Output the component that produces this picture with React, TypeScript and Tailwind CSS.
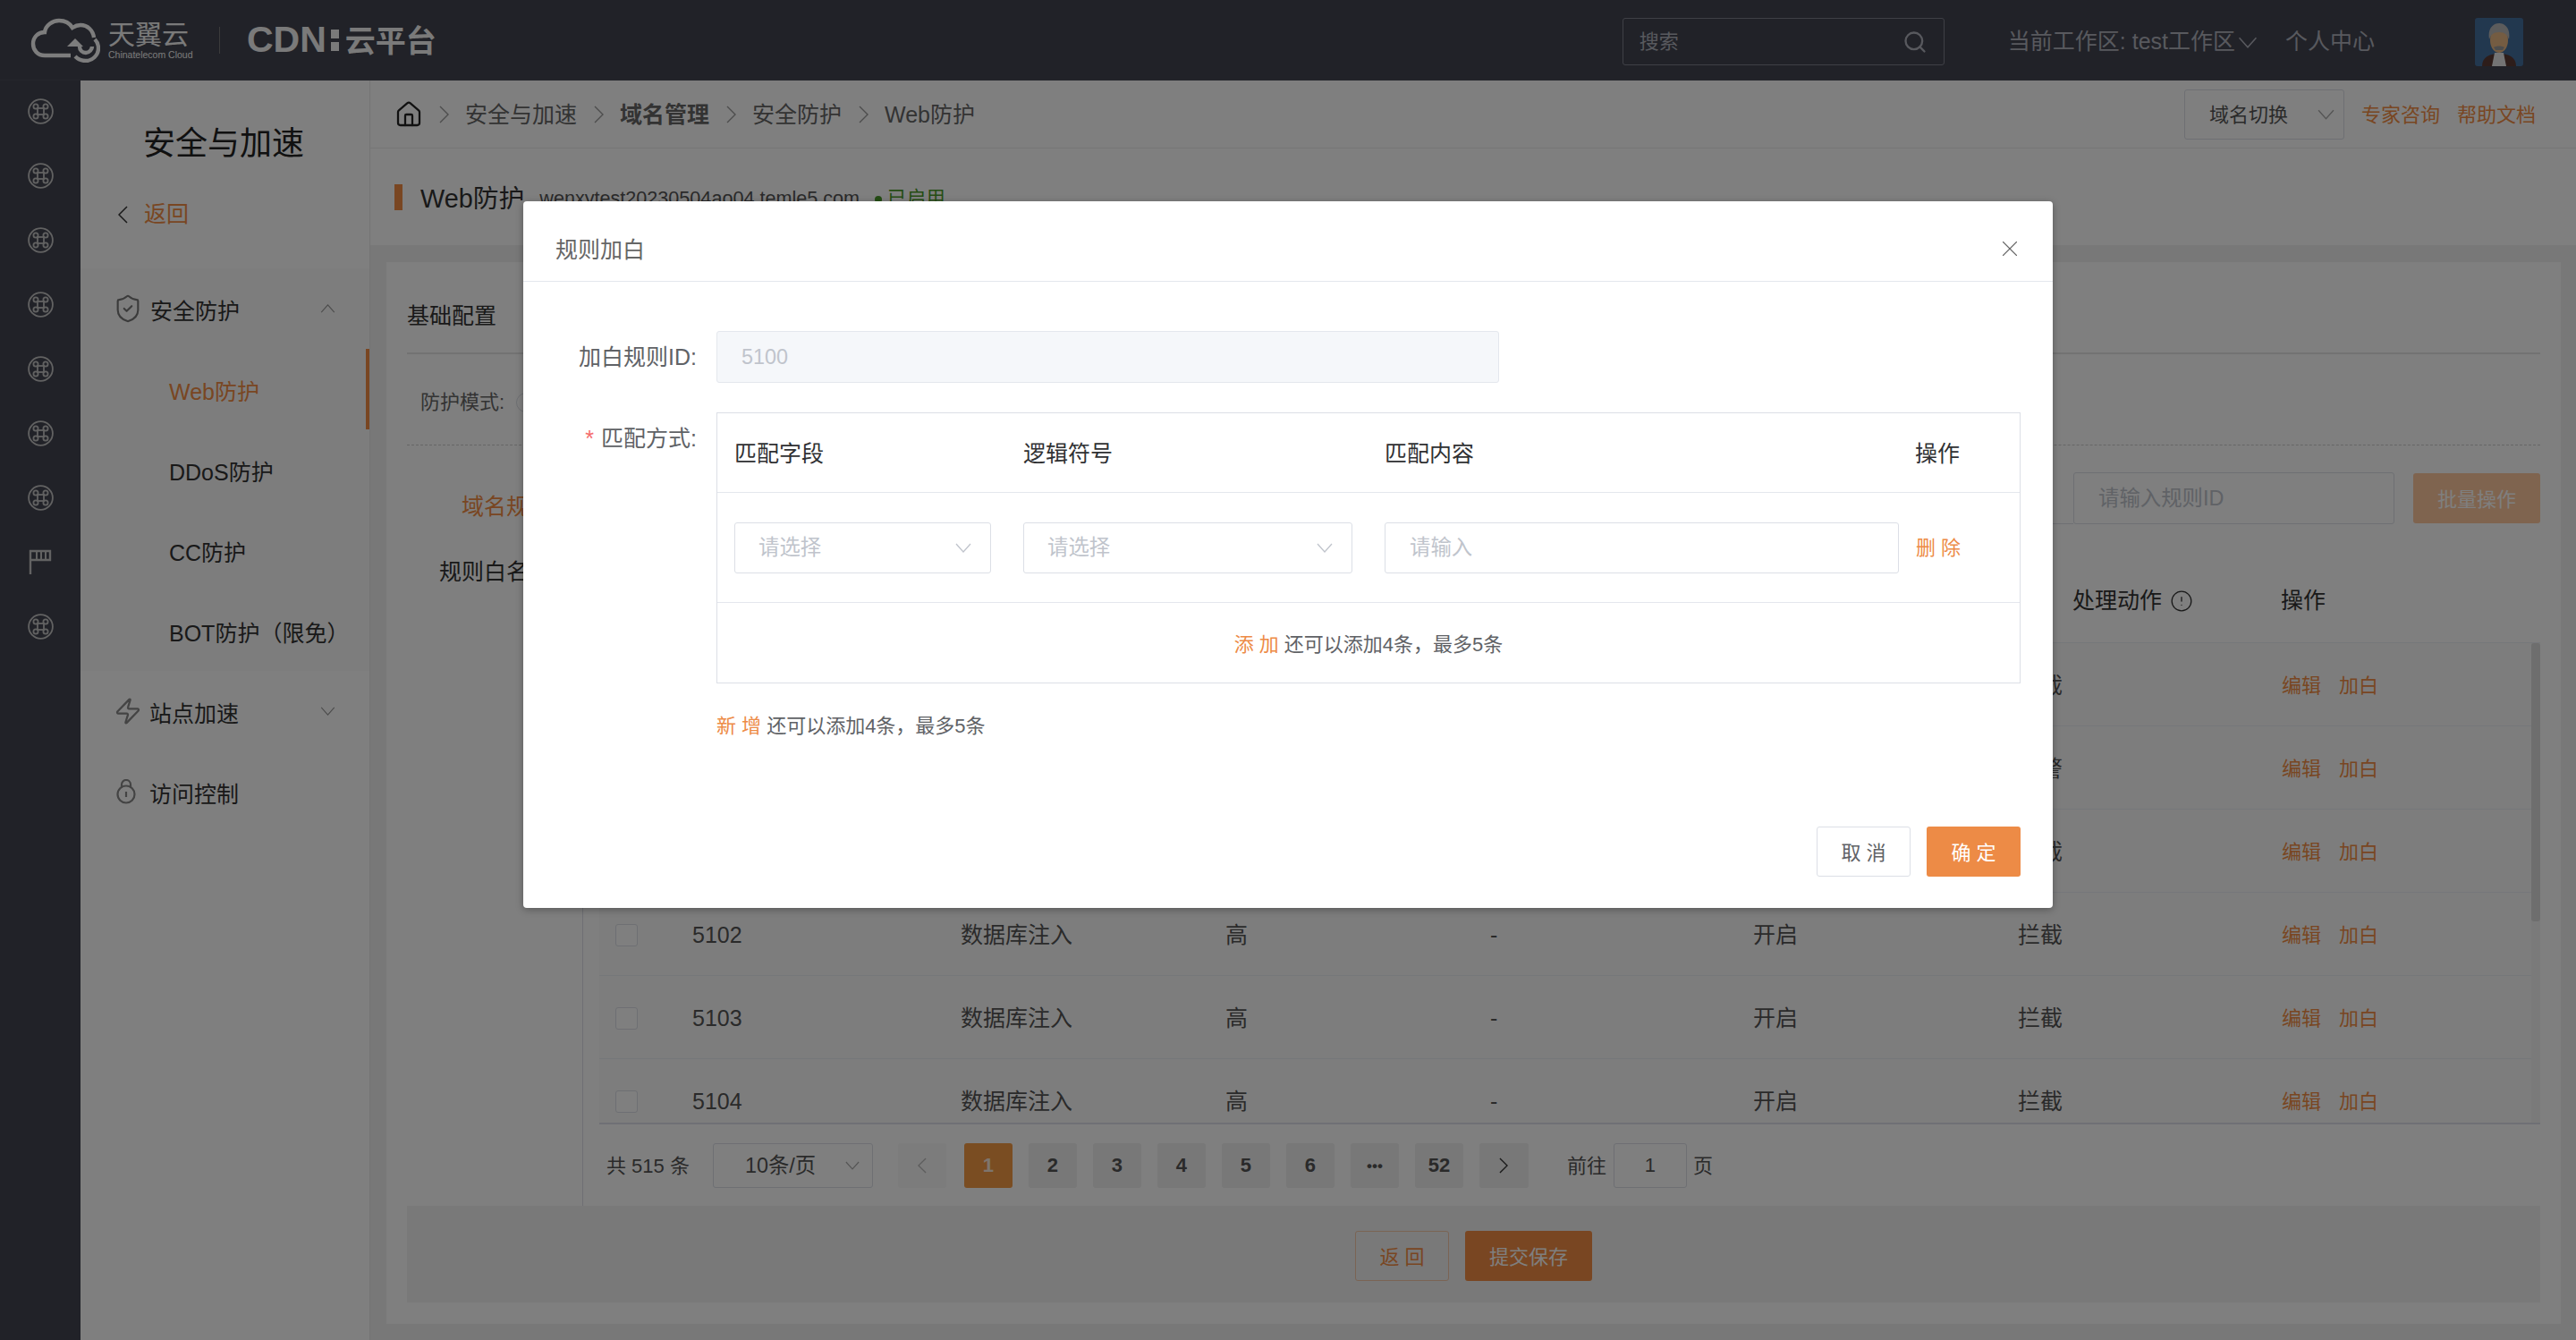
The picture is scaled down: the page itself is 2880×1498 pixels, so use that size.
import { House, Info, Search, ShieldCheck, X, Zap } from "lucide-react";

const FONT = "font-['Liberation_Sans','Noto_Sans_CJK_SC',sans-serif]";

const rows = [
  { id: "5099", action: "拦截" },
  { id: "5100", action: "告警" },
  { id: "5101", action: "拦截" },
  { id: "5102", action: "拦截" },
  { id: "5103", action: "拦截" },
  { id: "5104", action: "拦截" },
];

const pages = ["2", "3", "4", "5", "6", "•••", "52"];

// thin V used by every select and menu
const Chevron = ({ className, up }: { className: string; up?: boolean }) => (
  <svg viewBox="0 0 18 11" className={className} fill="none" stroke="currentColor" strokeWidth="1.3">
    <path d={up ? "M1 10l8-9 8 9" : "M1 1l8 9 8-9"} />
  </svg>
);

const Crumb = () => (
  <svg viewBox="0 0 11 20" className="h-[20px] w-[11px] text-[#9a9a9a]" fill="none" stroke="currentColor" strokeWidth="1.4">
    <path d="M1 1l9 9-9 9" />
  </svg>
);

const RailIcon = () => (
  <svg viewBox="0 0 29 29" className="h-[29px] w-[29px] text-[#c4c4c4]" fill="none" stroke="currentColor" strokeWidth="1.8">
    <circle cx="14.5" cy="14.5" r="13.4" />
    <rect x="11" y="11" width="7" height="7" />
    <circle cx="9" cy="9" r="2.6" />
    <circle cx="20" cy="9" r="2.6" />
    <circle cx="9" cy="20" r="2.6" />
    <circle cx="20" cy="20" r="2.6" />
  </svg>
);

const FlagIcon = () => (
  <svg viewBox="0 0 26 29" className="h-[29px] w-[26px] text-[#c4c4c4]" fill="none" stroke="currentColor" strokeWidth="2.4">
    <path d="M2 28V2h22v10H2" />
    <path d="M9 3v8M14 3v8M19 3v8" strokeWidth="2" />
  </svg>
);

const LockIcon = () => (
  <svg viewBox="0 0 22 28" className="h-[28px] w-[22px]" fill="none" stroke="currentColor" strokeWidth="2.2">
    <circle cx="11" cy="17" r="9.5" />
    <path d="M6 10V6a5 5 0 0 1 10 0v4" />
    <path d="M11 14v6" />
  </svg>
);

const CloudLogo = () => (
  <svg viewBox="0 0 78 50" className="h-[50px] w-[78px] text-[#fafafa]" fill="none" stroke="currentColor" strokeWidth="4.4">
    <path d="M45 42H16C8 42 3 36 3 29c0-8 6-13 13-13 1-8 9-13 16-13 7 0 12 3 15 8 3-2 6-3 9-3 8 0 14 6 15 14" />
    <path d="M72 24c3 3 4 7 4 10 0 8-7 14-14 14-5 0-9-2-12-5" />
    <path d="M55 32c0 4 3 7 7 7s7-4 7-7" />
    <path d="M41 32l9-9 9 9z" fill="currentColor" stroke="none" />
  </svg>
);

const Avatar = () => (
  <svg viewBox="0 0 54 54" className="h-[54px] w-[54px]">
    <rect width="54" height="54" rx="3" fill="#44709f" />
    <path d="M8 54c0-10 8-14 19-14s19 4 19 14z" fill="#5a3a34" />
    <path d="M19 54l3-15h10l3 15z" fill="#e8e8e8" />
    <ellipse cx="27" cy="25" rx="10" ry="14" fill="#e8b884" />
    <path d="M16 24c-2-12 4-18 11-18s13 6 11 18c-2-5-4-8-11-8s-9 3-11 8z" fill="#b8b8b8" />
    <path d="M21 33c3-2 9-2 12 0l-2 3h-8z" fill="#9a9a9a" />
  </svg>
);

export default function App() {
  return (
    <div className={`relative h-[1498px] w-full overflow-hidden bg-white text-[#333] ${FONT}`}>
      {/* top bar */}
      <header className="flex h-[90px] items-center border-b border-[#4a4c58] bg-[#424450] pl-[34px] text-[#b0b2bc]">
        <CloudLogo />
        <div className="ml-[9px] flex w-[90px] flex-col text-[#f4f4f4]">
          <span className="text-[30px] leading-[32px]">天翼云</span>
          <span className="text-[10.5px] leading-[12px] whitespace-nowrap">Chinatelecom Cloud</span>
        </div>
        <div className="ml-[34px] h-[30px] w-px bg-[#777]" />
        <span className="ml-[30px] text-[41px] leading-none font-bold text-[#f4f4f4]">CDN</span>
        <div className="ml-[5px] flex flex-col gap-[4px]">
          <span className="h-[10px] w-[9px] bg-[#f4f4f4]" />
          <span className="h-[10px] w-[9px] bg-[#f4f4f4]" />
        </div>
        <span className="mt-[3px] ml-[7px] text-[34px] leading-none font-bold text-[#f4f4f4]">云平台</span>

        <div className="ml-[1326px] flex h-[53px] w-[360px] items-center justify-between self-start rounded-[3px] border border-[#7e808c] mt-[20px] pr-[18px] pl-[18px] text-[22px]">
          <span>搜索</span>
          <Search size={28} strokeWidth={2} />
        </div>
        <span className="mt-[5px] ml-[71px] flex items-center text-[25px] whitespace-nowrap">
          当前工作区: test工作区
          <Chevron className="ml-[3px] h-[13px] w-[22px]" />
        </span>
        <span className="mt-[5px] ml-[31px] text-[25px] whitespace-nowrap">个人中心</span>
        <div className="mt-[20px] ml-[112px] self-start">
          <Avatar />
        </div>
      </header>

      <div className="flex h-[1408px]">
        {/* icon rail */}
        <aside className="flex w-[90px] shrink-0 flex-col items-center gap-[43px] bg-[#424450] pt-[20px]">
          <RailIcon />
          <RailIcon />
          <RailIcon />
          <RailIcon />
          <RailIcon />
          <RailIcon />
          <RailIcon />
          <FlagIcon />
          <RailIcon />
        </aside>

        {/* menu */}
        <nav className="w-[323px] shrink-0 bg-white">
          <h1 className="pt-[49px] pl-[70px] text-[36px] leading-[44px] text-[#222]">安全与加速</h1>
          <div className="mt-[42px] flex h-[30px] items-center pl-[42px] text-[25px] text-[#f28d44]">
            <svg viewBox="0 0 11 20" className="mr-[18px] h-[20px] w-[11px] text-[#333]" fill="none" stroke="currentColor" strokeWidth="1.5">
              <path d="M10 1l-9 9 9 9" />
            </svg>
            返回
          </div>
          <div className="mt-[45px] bg-[#fafafa]">
            <div className="flex h-[90px] items-center pr-[38px] pl-[36px] text-[25px]">
              <ShieldCheck size={34} strokeWidth={1.5} className="text-[#777]" />
              <span className="ml-[8px] flex-1 pt-[7px]">安全防护</span>
              <Chevron up className="h-[10px] w-[17px] text-[#999]" />
            </div>
            <div className="flex h-[90px] items-center border-r-4 border-[#f28d44] pt-[7px] pl-[99px] text-[25px] text-[#f28d44]">
              Web防护
            </div>
            <div className="flex h-[90px] items-center pt-[7px] pl-[99px] text-[25px]">DDoS防护</div>
            <div className="flex h-[90px] items-center pt-[7px] pl-[99px] text-[25px]">CC防护</div>
            <div className="flex h-[90px] items-center pt-[7px] pl-[99px] text-[25px]">BOT防护（限免）</div>
          </div>
          <div className="flex h-[90px] items-center pr-[38px] pl-[37px] text-[25px]">
            <Zap size={32} strokeWidth={1.7} className="text-[#888]" />
            <span className="ml-[8px] flex-1 pt-[7px]">站点加速</span>
            <Chevron className="h-[10px] w-[17px] text-[#999]" />
          </div>
          <div className="flex h-[90px] items-center pl-[40px] text-[25px]">
            <span className="text-[#888]">
              <LockIcon />
            </span>
            <span className="ml-[15px] pt-[7px]">访问控制</span>
          </div>
        </nav>

        <main className="flex min-w-0 flex-1 flex-col border-l border-[#e8e8e8]">
          {/* breadcrumb */}
          <div className="flex h-[76px] shrink-0 items-center gap-[18.5px] border-b border-[#ececec] pr-[45px] pl-[27px] text-[25px] text-[#666]">
            <House size={32} strokeWidth={1.7} className="-mr-[1px] text-[#222]" />
            <Crumb />
            <span className="pt-[2px]">安全与加速</span>
            <Crumb />
            <span className="pt-[2px] font-bold">域名管理</span>
            <Crumb />
            <span className="pt-[2px]">安全防护</span>
            <Crumb />
            <span className="pt-[2px]">Web防护</span>
            <div className="ml-auto flex items-center text-[22px]">
              <div className="flex h-[56px] w-[179px] items-center justify-between rounded-[3px] border border-[#dcdfe6] pr-[10px] pl-[27px]">
                <span className="pt-[2px] text-[#555]">域名切换</span>
                <Chevron className="h-[12px] w-[19px] text-[#aaa]" />
              </div>
              <span className="ml-[19px] pt-[2px] text-[#f28d44]">专家咨询</span>
              <span className="ml-[19px] pt-[2px] text-[#f28d44]">帮助文档</span>
            </div>
          </div>

          {/* page title */}
          <div className="flex h-[108px] shrink-0 items-center pl-[27px]">
            <span className="h-[29px] w-[9px] bg-[#f28d44]" />
            <span className="ml-[20px] pt-[5px] text-[28.8px] text-[#333]">Web防护</span>
            <span className="ml-[17px] pt-[5px] text-[21.6px] text-[#555]">wenxytest20230504ao04.temle5.com</span>
            <span className="mt-[5px] ml-[17px] h-[8px] w-[8px] rounded-full bg-[#4a9a2a]" />
            <span className="ml-[6px] pt-[5px] text-[21.6px] text-[#4a9a2a]">已启用</span>
          </div>

          <div className="min-h-0 flex-1 bg-[#f0f0f0] pt-[19px] pr-[17px] pb-[18px] pl-[18px]">
            <section className="flex h-full flex-col bg-white px-[23px] pb-[24px]">
              <div className="flex h-[103px] shrink-0 items-center border-b-2 border-[#e4e4e4] pt-[20px] text-[25px]">基础配置</div>
              <div className="flex h-[102px] shrink-0 items-center border-b border-dashed border-[#ccc] pt-[6px] pl-[15px] text-[22px] text-[#666]">
                防护模式:
                <span className="ml-[13px] h-[22px] w-[22px] rounded-full border border-[#dcdfe6]" />
              </div>

              <div className="flex min-h-0 flex-1">
                <div className="w-[197px] shrink-0 border-r border-[#dcdfe6] pt-[50px] text-[25px]">
                  <div className="h-[36px] pl-[61px] leading-[36px] text-[#f28d44]">域名规则</div>
                  <div className="mt-[37px] h-[36px] pl-[36px] leading-[36px]">规则白名单</div>
                </div>

                <div className="flex min-w-0 flex-1 flex-col pl-[18px]">
                  {/* filters */}
                  <div className="mt-[30px] flex h-[58px] shrink-0 items-center justify-end">
                    <div className="flex h-[58px] w-[80px] items-center border-b border-[#dcdfe6]">
                      <Chevron className="ml-[40px] h-[10px] w-[16px] text-[#aaa]" />
                    </div>
                    <div className="flex h-[58px] w-[359px] items-center rounded-[3px] border border-[#dcdfe6] pt-[2px] pl-[27px] text-[23.4px] text-[#c0c4cc]">
                      请输入规则ID
                    </div>
                    <div className="ml-[21px] flex h-[56px] w-[142px] items-center justify-center rounded-[3px] bg-[#ffc89e] pt-[2px] text-[22px] text-white">
                      批量操作
                    </div>
                  </div>

                  {/* table head */}
                  <div className="flex h-[133px] shrink-0 items-center border-b border-[#ebeef5] pt-[40px] pl-[1647px] text-[25px]">
                    <span className="flex w-[233px] items-center">
                      处理动作
                      <Info size={26} strokeWidth={1.2} className="ml-[9px] rotate-180" />
                    </span>
                    <span>操作</span>
                  </div>

                  {/* table body */}
                  <div className="flex h-[538px] shrink-0 border-b-2 border-[#dfe1ea] bg-[#fbfbfb]">
                    <div className="min-w-0 flex-1 overflow-hidden">
                      {rows.map((r) => (
                        <div
                          key={r.id}
                          className="grid h-[93px] grid-cols-[104px_300px_296px_296px_294px_296px_296px_1fr] items-center border-b border-[#ebeef5] pt-[3px] text-[25px] text-[#555]"
                        >
                          <span className="ml-[18px] h-[25px] w-[25px] rounded-[3px] border border-[#dcdfe6] bg-white" />
                          <span>{r.id}</span>
                          <span>数据库注入</span>
                          <span>高</span>
                          <span>-</span>
                          <span>开启</span>
                          <span>{r.action}</span>
                          <span className="-ml-[1px] flex gap-[20px] text-[22px] text-[#f28d44]">
                            <span>编辑</span>
                            <span>加白</span>
                          </span>
                        </div>
                      ))}
                    </div>
                    <div className="w-[10px] shrink-0 bg-[#f4f4f4]">
                      <div className="h-[311px] rounded-[3px] bg-[#dcdcdc]" />
                    </div>
                  </div>

                  {/* pagination */}
                  <div className="flex min-h-0 flex-1 items-center pl-[8px] text-[22px] text-[#555]">
                    <span className="pt-[2px]">共 515 条</span>
                    <div className="ml-[26px] flex h-[50px] w-[179px] items-center justify-between rounded-[3px] border border-[#dcdfe6] pr-[14px] pl-[35px] text-[23.4px]">
                      <span className="pt-[3px]">10条/页</span>
                      <Chevron className="h-[10px] w-[16px] text-[#aaa]" />
                    </div>
                    <div className="ml-[28px] flex h-[50px] w-[54px] items-center justify-center rounded-[3px] bg-[#f8f8f8] text-[#bbb]">
                      <svg viewBox="0 0 11 20" className="h-[18px] w-[10px]" fill="none" stroke="currentColor" strokeWidth="1.5">
                        <path d="M10 1l-9 9 9 9" />
                      </svg>
                    </div>
                    <div className="mr-[18px] ml-[20px] flex h-[50px] w-[54px] items-center justify-center rounded-[3px] bg-[#f59a45] font-bold text-white/80">
                      1
                    </div>
                    <div className="flex gap-[18px]">
                      {pages.map((p) => (
                        <div key={p} className="flex h-[50px] w-[54px] items-center justify-center rounded-[3px] bg-[#f0f0f0] font-bold text-[#555]">
                          {p === "•••" ? <span className="pt-[3px] text-[17px]">{p}</span> : p}
                        </div>
                      ))}
                      <div className="flex h-[50px] w-[55px] items-center justify-center rounded-[3px] bg-[#f0f0f0] text-[#333]">
                        <svg viewBox="0 0 11 20" className="h-[18px] w-[10px]" fill="none" stroke="currentColor" strokeWidth="1.5">
                          <path d="M1 1l9 9-9 9" />
                        </svg>
                      </div>
                    </div>
                    <span className="ml-[43px] pt-[2px]">前往</span>
                    <div className="ml-[8px] flex h-[50px] w-[82px] items-center justify-center rounded-[3px] border border-[#dcdfe6]">1</div>
                    <span className="ml-[7px] pt-[2px]">页</span>
                  </div>
                </div>
              </div>

              {/* bottom actions */}
              <div className="flex h-[108px] shrink-0 items-center justify-center gap-[18px] bg-[#f2f2f2] pt-[4px] text-[22px]">
                <div className="flex h-[56px] w-[105px] items-center justify-center rounded-[3px] border border-[#f5c8a8] bg-white/10 pt-[3px] text-[#f28d44]">
                  返 回
                </div>
                <div className="flex h-[56px] w-[142px] items-center justify-center rounded-[3px] bg-[#f28d44] pt-[3px] text-white">提交保存</div>
              </div>
            </section>
          </div>
        </main>
      </div>

      {/* dialog */}
      <div className="absolute inset-0 z-10 flex justify-center bg-black/50 pt-[225px]">
        <div className="flex h-[790px] w-[1710px] flex-col rounded-[4px] bg-white shadow-[0_2px_8px_rgba(0,0,0,0.3)]">
          <div className="flex h-[90px] shrink-0 items-center justify-between border-b border-[#e4e7ed] pt-[20px] pr-[33px] pl-[36px]">
            <span className="text-[25px] text-[#666]">规则加白</span>
            <X size={30} strokeWidth={0.9} className="mb-[4px] text-[#666]" />
          </div>

          <div className="pt-[55px]">
            <div className="flex h-[58px] items-center">
              <label className="w-[216px] pt-[2px] pr-[22px] text-right text-[25px] text-[#606266]">加白规则ID:</label>
              <div className="flex h-[58px] w-[875px] items-center rounded-[3px] border border-[#e4e7ed] bg-[#f5f7fa] pt-[2px] pl-[27px] text-[23.4px] text-[#c0c4cc]">
                5100
              </div>
            </div>

            <div className="mt-[33px] flex">
              <label className="h-[58px] w-[216px] pr-[22px] text-right text-[25px] leading-[58px] text-[#606266]">
                <span className="mr-[8px] text-[#f56c6c]">*</span>匹配方式:
              </label>
              <div className="w-[1458px] border border-[#dcdfe6]">
                <div className="grid h-[89px] grid-cols-[323px_404px_593px_1fr] items-center border-b border-[#e4e7ed] pt-[4px] pl-[19px] text-[25px] text-[#303133]">
                  <span>匹配字段</span>
                  <span>逻辑符号</span>
                  <span>匹配内容</span>
                  <span>操作</span>
                </div>
                <div className="grid h-[123px] grid-cols-[323px_404px_593px_1fr] items-center border-b border-[#e4e7ed] pl-[19px] text-[23.4px] text-[#c0c4cc]">
                  <div className="flex h-[57px] w-[287px] items-center justify-between rounded-[3px] border border-[#dcdfe6] pr-[21px] pl-[26px]">
                    <span className="pt-[2px]">请选择</span>
                    <Chevron className="h-[11px] w-[18px]" />
                  </div>
                  <div className="flex h-[57px] w-[368px] items-center justify-between rounded-[3px] border border-[#dcdfe6] pr-[21px] pl-[26px]">
                    <span className="pt-[2px]">请选择</span>
                    <Chevron className="h-[11px] w-[18px]" />
                  </div>
                  <div className="flex h-[57px] w-[575px] items-center rounded-[3px] border border-[#dcdfe6] pt-[2px] pl-[27px]">请输入</div>
                  <span className="pl-[1px] text-[22px] text-[#ed8b46]">删 除</span>
                </div>
                <div className="flex h-[89px] items-center justify-center pt-[3px] text-[22px] text-[#606266]">
                  <span className="mr-[6px] text-[#ed8b46]">添 加</span>
                  还可以添加4条，最多5条
                </div>
              </div>
            </div>

            <div className="mt-[32px] ml-[216px] flex h-[30px] items-center text-[22px] text-[#606266]">
              <span className="mr-[6px] text-[#ed8b46]">新 增</span>
              还可以添加4条，最多5条
            </div>
          </div>

          <div className="mt-auto flex justify-end gap-[18px] pr-[36px] pb-[35px] text-[22px]">
            <div className="flex h-[56px] w-[105px] items-center justify-center rounded-[3px] border border-[#dcdfe6] pt-[2px] text-[#606266]">取 消</div>
            <div className="flex h-[56px] w-[105px] items-center justify-center rounded-[3px] bg-[#ed8b46] pt-[2px] text-white">确 定</div>
          </div>
        </div>
      </div>
    </div>
  );
}
